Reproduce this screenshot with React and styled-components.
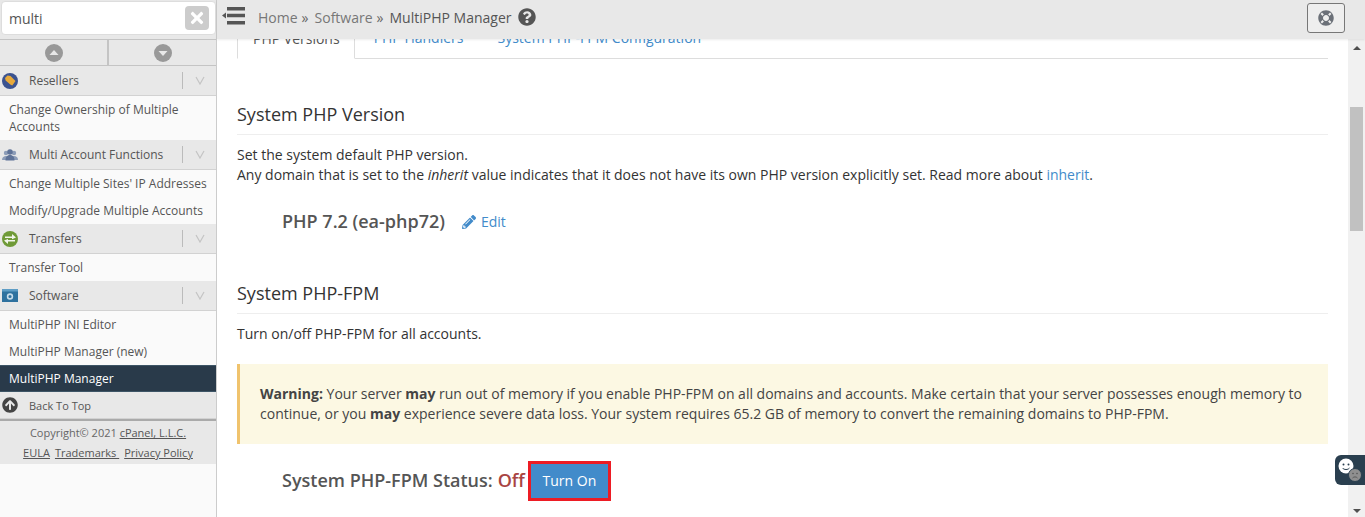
import React from "react";
import styled, { createGlobalStyle } from "styled-components";
import { FaPencilAlt, FaQuestionCircle, FaLifeRing, FaTimes, FaArrowCircleUp } from "react-icons/fa";

const GlobalStyle = createGlobalStyle`
  html, body {
    margin: 0;
    height: 100%;
    overflow: hidden;
    background: #fff;
    font-family: "Open Sans", "Liberation Sans", sans-serif;
    color: #333;
  }
  * { box-sizing: border-box; }
`;

const Page = styled.div`
  display: grid;
  grid-template-columns: 217px 1fr;
  width: 1365px;
  height: 517px;
  overflow: hidden;
`;

const Sidebar = styled.aside`
  display: flex;
  flex-direction: column;
  background: #fafafa;
  border-right: 1px solid #ccc;
  height: 517px;
`;

const SearchBar = styled.div`
  height: 39px;
  flex: none;
  background: #e8e8e8;
  padding: 1px 0 0 1px;
`;

const SearchBox = styled.div`
  width: 215px;
  height: 34px;
  background: #fff;
  border: 1px solid #ddd;
  border-radius: 4px;
  display: flex;
  align-items: center;
  justify-content: space-between;
  padding: 0 6px 0 7px;
  font-size: 14px;
  color: #555;
`;

const ClearButton = styled.span`
  width: 24px;
  height: 24px;
  border-radius: 4px;
  background: #ccc;
  color: #fff;
  display: flex;
  align-items: center;
  justify-content: center;
  font-size: 18px;
`;

const ArrowRow = styled.div`
  display: grid;
  grid-template-columns: 107px 109px;
  height: 27px;
  flex: none;
  background: #e8e8e8;
  border-top: 1px solid #c4c4c4;
  border-bottom: 1px solid #c4c4c4;
`;

const ArrowCell = styled.div`
  display: flex;
  align-items: center;
  justify-content: center;
  border-left: ${(p) => (p.$divider ? "2px solid #c4c4c4" : "0")};
`;

const GroupHeader = styled.div`
  display: flex;
  align-items: center;
  height: ${(p) => p.$height || 30}px;
  flex: none;
  background: #e8e8e8;
  border-bottom: 1px solid #d2d2d2;
  font-size: ${(p) => p.$fontSize || 12}px;
  color: #555;
`;

const GroupIcon = styled.span`
  width: 29px;
  flex: none;
  display: flex;
  justify-content: flex-start;
  padding-left: 2px;
  align-items: center;
  color: #444;
`;

const GroupLabel = styled.span`
  flex: 1;
`;

const GroupToggle = styled.span`
  width: 34px;
  height: 17px;
  flex: none;
  border-left: 1px solid #bbb;
  display: flex;
  align-items: center;
  justify-content: center;
`;

const MenuItem = styled.div`
  flex: none;
  min-height: 27px;
  padding: ${(p) => (p.$active ? "4px" : "5px")} 9px;
  font-size: 12px;
  line-height: 17px;
  color: ${(p) => (p.$active ? "#fff" : "#555")};
  background: ${(p) => (p.$active ? "#293a4a" : "transparent")};
  border-top: ${(p) => (p.$active ? "1px solid #3d5566" : "0")};
  border-bottom: ${(p) => (p.$active ? "1px solid #3d5566" : "0")};
`;

const SideFooter = styled.div`
  flex: none;
  height: 45px;
  background: #e8e8e8;
  border-top: 2px solid #aaa;
  text-align: center;
  font-size: 11px;
  line-height: 19px;
  padding-top: 2px;
  color: #666;
  a { color: #555; text-decoration: underline; }
`;

const FooterLinks = styled.div`
  display: flex;
  justify-content: center;
  gap: 5px;
  margin-top: 1px;
`;

const Main = styled.main`
  display: flex;
  flex-direction: column;
  min-width: 0;
  height: 517px;
`;

const Header = styled.header`
  height: 39px;
  flex: none;
  background: #e8e8e8;
  display: flex;
  align-items: center;
  padding: 0 20px 5px 5px;
  box-shadow: 0 1px 2px rgba(0, 0, 0, 0.08);
  position: relative;
  z-index: 1;
`;

const NavIcon = styled.svg`
  flex: none;
  margin-bottom: 3px;
`;

const Crumbs = styled.nav`
  display: flex;
  align-items: center;
  flex: 1;
  margin-left: 13px;
  font-size: 14px;
  color: #777;
`;

const CrumbSep = styled.span`
  margin: 0 6px 0 4px;
  color: #666;
`;

const CrumbCurrent = styled.span`
  color: #555;
`;

const HelpIcon = styled(FaQuestionCircle)`
  font-size: 18px;
  color: #555;
  margin-left: 7px;
`;

const SupportButton = styled.button`
  width: 38px;
  height: 30px;
  margin-top: 2px;
  border: 1px solid #777;
  border-radius: 3px;
  background: #eee;
  color: #6b7078;
  display: flex;
  align-items: center;
  justify-content: center;
  padding: 0;
  font-size: 16px;
`;

const Body = styled.div`
  flex: 1;
  display: flex;
  min-height: 0;
`;

const Content = styled.div`
  flex: 1;
  min-width: 0;
  overflow: hidden;
  padding: 0 20px;
  font-size: 14px;
  line-height: 19px;
  color: #333;
`;

const Tabs = styled.div`
  display: flex;
  margin-top: -21px;
  height: 41px;
  border-bottom: 1px solid #ddd;
`;

const Tab = styled.div`
  height: ${(p) => (p.$active ? 41 : 40)}px;
  padding: 10px 14px 0 15px;
  margin-right: ${(p) => p.$gap}px;
  color: ${(p) => (p.$active ? "#555" : "#428bca")};
  background: #fff;
  border: ${(p) => (p.$active ? "1px solid #ddd" : "0")};
  border-bottom: ${(p) => (p.$active ? "1px solid #fff" : "0")};
`;

const SectionTitle = styled.h3`
  margin: ${(p) => p.$top}px 0 10px;
  padding-bottom: 7px;
  font-size: 18px;
  font-weight: 400;
  line-height: 25px;
  color: #333;
  border-bottom: 1px solid #eee;
`;

const Para = styled.p`
  margin: ${(p) => p.$top || 0}px 0 0;
  em { font-style: italic; }
  a { color: #428bca; }
`;

const ValueRow = styled.div`
  display: flex;
  align-items: center;
  margin: ${(p) => p.$top}px 0 0 45px;
`;

const ValueText = styled.span`
  font-size: 18px;
  font-weight: 600;
  line-height: 25px;
  color: #555;
`;

const StatusText = styled(ValueText)`
  margin-bottom: 2px;
`;

const OffText = styled.span`
  color: #a94442;
  margin-left: 5px;
`;

const EditLink = styled.a`
  display: inline-flex;
  align-items: center;
  gap: 5px;
  margin-left: 17px;
  color: #428bca;
  svg { font-size: 14px; }
`;

const Warning = styled.div`
  margin-top: 21px;
  height: 80px;
  padding: 20px 20px 0 20px;
  background: #fcf8e3;
  border-left: 3px solid #f0c36d;
  line-height: 20px;
  color: #444;
  b { font-weight: 700; }
`;

const Highlight = styled.span`
  display: inline-flex;
  margin-left: 3px;
  border: 3px solid #ed1c24;
`;

const PrimaryButton = styled.button`
  width: 77px;
  height: 34px;
  border: 0;
  background: #428bca;
  color: #fff;
  font: 400 14px "Open Sans", sans-serif;
  padding: 0 0 2px;
`;

const Scrollbar = styled.div`
  width: 17px;
  flex: none;
  background: #f1f1f1;
  display: flex;
  flex-direction: column;
  align-items: center;
  padding-top: 7px;
`;

const ScrollArrow = styled.span`
  width: 0;
  height: 0;
  border-left: 4px solid transparent;
  border-right: 4px solid transparent;
  border-bottom: ${(p) => (p.$down ? "0" : "4px solid #505050")};
  border-top: ${(p) => (p.$down ? "4px solid #505050" : "0")};
  margin-top: ${(p) => (p.$down ? "auto" : "0")};
  margin-bottom: ${(p) => (p.$down ? "4px" : "0")};
`;

const ScrollThumb = styled.div`
  width: 13px;
  height: 124px;
  margin-top: 57px;
  background: #c1c1c1;
`;

const ChatTab = styled.div`
  position: absolute;
  left: 1335px;
  top: 455px;
  width: 30px;
  height: 30px;
  background: #2a3f4f;
  border-radius: 6px 0 0 6px;
`;

const NavToggle = () => (
  <NavIcon width="23" height="18" viewBox="0 0 23 18">
    <path d="M5 0h18v3.400H5zM5 6.800h18v3.400H5zM5 14h18v3.400H5z" fill="#555" />
    <path d="M0 8.500l4-3v6z" fill="#555" />
  </NavIcon>
);

const CircleArrow = ({ down }) => (
  <svg width="18" height="18" viewBox="0 0 18 18">
    <circle cx="9" cy="9" r="9" fill="#999" />
    <path d={down ? "M4.500 7h9L9 12z" : "M4.500 11h9L9 6z"} fill="#e8e8e8" />
  </svg>
);

const Chevron = () => (
  <svg width="10" height="9" viewBox="0 0 10 9">
    <path d="M1 1l4 7 4-7" fill="none" stroke="#c4c4c4" strokeWidth="1.2" />
  </svg>
);

const ResellersIcon = () => (
  <svg width="16" height="16" viewBox="0 0 16 16">
    <circle cx="8" cy="8" r="8" fill="#3b5390" />
    <path d="M3 5l2.500-2.400 3 .3 5 5-3.200 4.600-1.700-.8L3.600 7.600z" fill="#e8a93a" />
  </svg>
);

const AccountsIcon = () => (
  <svg width="16" height="14" viewBox="0 0 16 14">
    <circle cx="4" cy="5" r="2.200" fill="#8d9db8" />
    <circle cx="12" cy="5" r="2.200" fill="#8d9db8" />
    <path d="M0 12c0-3 2-4 4-4s4 1 4 4z" fill="#8d9db8" />
    <path d="M8 12c0-3 2-4 4-4s4 1 4 4z" fill="#8d9db8" />
    <circle cx="8" cy="4" r="2.800" fill="#5f7398" />
    <path d="M3.500 12.500c0-4 2-5.500 4.500-5.500s4.500 1.500 4.500 5.500z" fill="#5f7398" />
  </svg>
);

const TransfersIcon = () => (
  <svg width="16" height="16" viewBox="0 0 16 16">
    <circle cx="8" cy="8" r="8" fill="#6f9a37" />
    <path d="M3 5.500h7V3l4 3.500-4 1.700V7H3zM13 10.500H6V13L2 9.500 6 8v1h7z" fill="#f3f6ec" />
  </svg>
);

const SoftwareIcon = () => (
  <svg width="16" height="13" viewBox="0 0 16 13">
    <rect width="16" height="13" fill="#2f729f" />
    <rect x="0" y="0" width="16" height="2.500" fill="#5e9dc5" />
    <circle cx="8" cy="7.500" r="2.400" fill="none" stroke="#c7dcea" strokeWidth="1.600" />
  </svg>
);

const ChatFaces = () => (
  <svg width="30" height="30" viewBox="0 0 30 30">
    <circle cx="11" cy="11" r="7.500" fill="#fff" />
    <circle cx="8.500" cy="9.500" r="1" fill="#2a3f4f" />
    <circle cx="13.500" cy="9.500" r="1" fill="#2a3f4f" />
    <path d="M7.500 13c1.500 2 5.500 2 7 0" fill="none" stroke="#2a3f4f" strokeWidth="1" />
    <circle cx="20" cy="20" r="6.500" fill="#8f8f8f" stroke="#2a3f4f" strokeWidth="1" />
    <circle cx="18" cy="18.500" r=".8" fill="#555" />
    <circle cx="22" cy="18.500" r=".8" fill="#555" />
    <path d="M17.500 23c1.500-1.500 3.500-1.500 5 0" fill="none" stroke="#555" strokeWidth=".9" />
  </svg>
);

const Group = ({ icon, label, height }) => (
  <GroupHeader $height={height}>
    <GroupIcon>{icon}</GroupIcon>
    <GroupLabel>{label}</GroupLabel>
    <GroupToggle>
      <Chevron />
    </GroupToggle>
  </GroupHeader>
);

export default function App() {
  return (
    <Page>
      <GlobalStyle />
      <Sidebar>
        <SearchBar>
          <SearchBox>
            multi
            <ClearButton>
              <FaTimes />
            </ClearButton>
          </SearchBox>
        </SearchBar>
        <ArrowRow>
          <ArrowCell>
            <CircleArrow />
          </ArrowCell>
          <ArrowCell $divider>
            <CircleArrow down />
          </ArrowCell>
        </ArrowRow>
        <Group icon={<ResellersIcon />} label="Resellers" />
        <MenuItem>Change Ownership of Multiple Accounts</MenuItem>
        <Group icon={<AccountsIcon />} label="Multi Account Functions" />
        <MenuItem>Change Multiple Sites' IP Addresses</MenuItem>
        <MenuItem>Modify/Upgrade Multiple Accounts</MenuItem>
        <Group icon={<TransfersIcon />} label="Transfers" />
        <MenuItem>Transfer Tool</MenuItem>
        <Group icon={<SoftwareIcon />} label="Software" />
        <MenuItem>MultiPHP INI Editor</MenuItem>
        <MenuItem>MultiPHP Manager (new)</MenuItem>
        <MenuItem $active>MultiPHP Manager</MenuItem>
        <GroupHeader $height={27} $fontSize={11}>
          <GroupIcon>
            <FaArrowCircleUp size={16} />
          </GroupIcon>
          <GroupLabel>Back To Top</GroupLabel>
        </GroupHeader>
        <SideFooter>
          <div>
            Copyright© 2021 <a>cPanel, L.L.C.</a>
          </div>
          <FooterLinks>
            <a>EULA</a>
            <a>Trademarks&nbsp;</a>
            <a>Privacy Policy</a>
          </FooterLinks>
        </SideFooter>
      </Sidebar>
      <Main>
        <Header>
          <NavToggle />
          <Crumbs>
            Home<CrumbSep>»</CrumbSep>Software<CrumbSep>»</CrumbSep>
            <CrumbCurrent>MultiPHP Manager</CrumbCurrent>
            <HelpIcon />
          </Crumbs>
          <SupportButton>
            <FaLifeRing />
          </SupportButton>
        </Header>
        <Body>
          <Content>
            <Tabs>
              <Tab $active $gap={4}>PHP Versions</Tab>
              <Tab $gap={5}>PHP Handlers</Tab>
              <Tab $gap={0}>System PHP-FPM Configuration</Tab>
            </Tabs>
            <SectionTitle $top={43}>System PHP Version</SectionTitle>
            <Para>Set the system default PHP version.</Para>
            <Para $top={1}>
              Any domain that is set to the <em>inherit</em> value indicates that it does not have its
              own PHP version explicitly set. Read more about <a>inherit</a>.
            </Para>
            <ValueRow $top={25}>
              <ValueText>PHP 7.2 (ea-php72)</ValueText>
              <EditLink>
                <FaPencilAlt />
                Edit
              </EditLink>
            </ValueRow>
            <SectionTitle $top={47}>System PHP-FPM</SectionTitle>
            <Para>Turn on/off PHP-FPM for all accounts.</Para>
            <Warning>
              <b>Warning:</b> Your server <b>may</b> run out of memory if you enable PHP-FPM on all
              domains and accounts. Make certain that your server possesses enough memory to continue,
              or you <b>may</b> experience severe data loss. Your system requires 65.2 GB of memory to
              convert the remaining domains to PHP-FPM.
            </Warning>
            <ValueRow $top={17}>
              <StatusText>
                System PHP-FPM Status:<OffText>Off</OffText>
              </StatusText>
              <Highlight>
                <PrimaryButton>Turn On</PrimaryButton>
              </Highlight>
            </ValueRow>
          </Content>
          <Scrollbar>
            <ScrollArrow />
            <ScrollThumb />
            <ScrollArrow $down />
          </Scrollbar>
        </Body>
      </Main>
      <ChatTab>
        <ChatFaces />
      </ChatTab>
    </Page>
  );
}
